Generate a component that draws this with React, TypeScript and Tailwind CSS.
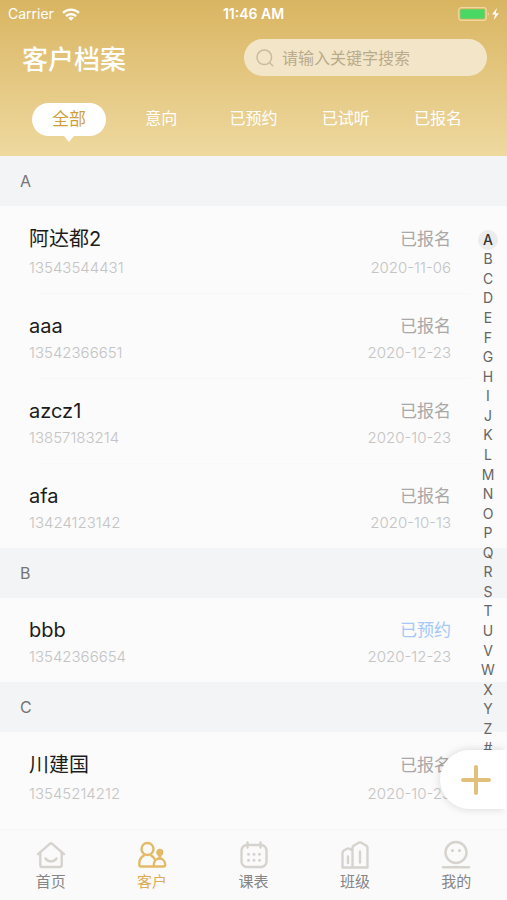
import { useState } from "react";
import type { ReactNode } from "react";

type Customer = {
  name: string;
  phone: string;
  status: string;
  date: string;
};

const filters = ["全部", "意向", "已预约", "已试听", "已报名"];

const groups: { letter: string; customers: Customer[] }[] = [
  {
    letter: "A",
    customers: [
      { name: "阿达都2", phone: "13543544431", status: "已报名", date: "2020-11-06" },
      { name: "aaa", phone: "13542366651", status: "已报名", date: "2020-12-23" },
      { name: "azcz1", phone: "13857183214", status: "已报名", date: "2020-10-23" },
      { name: "afa", phone: "13424123142", status: "已报名", date: "2020-10-13" },
    ],
  },
  {
    letter: "B",
    customers: [
      { name: "bbb", phone: "13542366654", status: "已预约", date: "2020-12-23" },
    ],
  },
  {
    letter: "C",
    customers: [
      { name: "川建国", phone: "13545214212", status: "已报名", date: "2020-10-23" },
    ],
  },
];

const letters = "ABCDEFGHIJKLMNOPQRSTUVWXYZ#".split("");

function Icon({ children }: { children: ReactNode }) {
  return (
    <svg
      viewBox="0 0 30 30"
      className="size-[30px]"
      fill="none"
      stroke="currentColor"
      strokeWidth="2.4"
      strokeLinecap="round"
      strokeLinejoin="round"
      aria-hidden="true"
    >
      {children}
    </svg>
  );
}

const tabs = [
  {
    label: "首页",
    icon: (
      <Icon>
        <path d="M2 14.2 13.8 3.9a1.8 1.8 0 0 1 2.4 0L28 14.2" />
        <path d="M4.3 12.5V25a2 2 0 0 0 2 2h17.4a2 2 0 0 0 2-2V12.5" />
        <path d="M9.5 18.5c2.6 3.8 8.4 3.8 11 0" />
      </Icon>
    ),
  },
  {
    label: "客户",
    icon: (
      <Icon>
        <circle cx="10.5" cy="9" r="6" />
        <path d="M7 15.4C4.200 17 2.300 20 2.300 23.500V25a1.500 1.500 0 0 0 1.500 1.500h22.900a1.500 1.500 0 0 0 1.500-1.500c0-4-2.500-6.500-5.700-6.500s-5.700 2.500-5.700 6.500v1.200" />
        <path d="M14 15.4c2 1 3.400 2.600 4.200 4.600" />
        <circle cx="22.800" cy="12.300" r="2.400" fill="currentColor" />
        <path d="M22.800 13v5" strokeWidth="3" />
      </Icon>
    ),
  },
  {
    label: "课表",
    icon: (
      <Icon>
        <rect x="2.500" y="5" width="25" height="22" rx="5.500" />
        <path d="M8.500 2.500v5M21.500 2.500v5" />
        <path
          d="M9.500 14.200h.01M15 14.200h.01M20.500 14.200h.01M9.500 20.200h.01M15 20.200h.01M20.500 20.200h.01"
          strokeWidth="3"
        />
      </Icon>
    ),
  },
  {
    label: "班级",
    icon: (
      <Icon>
        <path
          d="M2.500 27.500V12.800c0-.8.4-1.500 1-2l3.500-2.100a2.500 2.500 0 0 1 2.500 0l3 1.800M2.500 27.500h25V7.700c0-.8-.4-1.600-1.100-2L21.300 2.700a3 3 0 0 0-2.600 0L13.600 5.700c-.7.4-1.100 1.200-1.100 2v19.800"
        />
        <path d="M8 16.500v6.500M20 11.500v11" />
      </Icon>
    ),
  },
  {
    label: "我的",
    icon: (
      <Icon>
        <circle cx="15" cy="12.500" r="10.500" />
        <path d="M11.500 10.500h.01M18.500 10.500h.01" strokeWidth="3.200" />
        <path d="M2 27.200h26" />
      </Icon>
    ),
  },
];

function StatusBar() {
  return (
    <div className="grid h-7 grid-cols-3 items-center px-2 text-sm leading-none">
      <div className="flex items-center gap-2">
        <span>Carrier</span>
        <svg viewBox="0 0 18 13" className="h-[13px] w-[18px]" aria-hidden="true">
          <g fill="none" stroke="white" strokeWidth="2.300">
            <path d="M1 4.900a11.500 11.500 0 0 1 16 0" />
            <path d="M4 8.100a7.200 7.200 0 0 1 10 0" />
          </g>
          <path d="M9 12.800 6.200 10a4 4 0 0 1 5.600 0z" fill="white" />
        </svg>
      </div>
      <span className="text-center font-semibold">11:46 AM</span>
      <svg viewBox="0 0 44 14" className="h-3.5 w-11 justify-self-end" aria-hidden="true">
        <rect x="3.700" y=".7" width="27.500" height="12.600" rx="2.500" fill="none" stroke="#f3d7a0" strokeWidth="1.200" />
        <rect x="5.300" y="2.300" width="24.300" height="9.400" rx="1" fill="#4bd763" />
        <path d="M32.800 5.300c1.600.4 1.600 3 0 3.400z" fill="#f3d7a0" />
        <path d="M42 1 37 7.600h3.200L38.700 13 44 6.300h-3.400z" fill="white" />
      </svg>
    </div>
  );
}

function CustomerRow({ customer }: { customer: Customer }) {
  const leading = /[\u4e00-\u9fff]/.test(customer.name) ? "leading-[27px]" : "leading-6";
  const statusColor = customer.status === "已预约" ? "text-[#a5c8f8]" : "text-[#a8a8a8]";

  return (
    <li className="group pt-5">
      <div className="flex justify-between pr-14 pb-[15px] pl-[29px]">
        <div>
          <h3 className={`text-xl text-[#1c1c1c] ${leading}`}>{customer.name}</h3>
          <p className="mt-[5px] text-[15px] leading-5 font-light text-[#c4c4c4]">{customer.phone}</p>
        </div>
        <div className="text-right">
          <p className={`text-[17px] ${leading} ${statusColor}`}>{customer.status}</p>
          <p className="mt-[5px] text-[15px] leading-5 font-light text-[#c4c4c4]">{customer.date}</p>
        </div>
      </div>
      <div className="mr-9 ml-10 h-px bg-[#f7f7f7] group-last:hidden" />
    </li>
  );
}

export default function App() {
  const [filter, setFilter] = useState("全部");
  const [tab, setTab] = useState("客户");

  return (
    <div className="flex h-dvh flex-col overflow-hidden bg-[#fbfbfb] font-['Inter','Noto_Sans_CJK_SC',sans-serif]">
      <header className="shrink-0 bg-linear-to-b from-[#d9b561] to-[#efd99f] text-white">
        <StatusBar />
        <div className="flex items-center justify-between pt-[11px] pr-5 pl-[22px]">
          <h1 className="pt-1 text-[26px] leading-8 font-medium">客户档案</h1>
          <label className="flex h-[37px] w-[243px] items-center gap-2 rounded-full bg-[#f3e6c8] pl-3">
            <svg
              viewBox="0 0 18 18"
              className="size-[18px] shrink-0"
              fill="none"
              stroke="#c9bb9c"
              strokeWidth="1.500"
              strokeLinecap="round"
              aria-hidden="true"
            >
              <circle cx="8.300" cy="8.300" r="7.300" />
              <path d="m13.700 13.700 3 3" />
            </svg>
            <input
              type="search"
              aria-label="搜索"
              placeholder="请输入关键字搜索"
              className="w-full min-w-0 bg-transparent text-base text-[#8b7b58] outline-none placeholder:text-[#b9ab8c]"
            />
          </label>
        </div>
        <nav className="flex px-[23px] pt-[27px] pb-5">
          {filters.map((name) => (
            <div key={name} className="flex flex-1 justify-center">
              {name === filter ? (
                <button className="relative h-[33px] w-[74px] rounded-full bg-white text-[17px] leading-none text-[#cf9f3c]">
                  {name}
                  <svg
                    viewBox="0 0 14 8"
                    className="absolute top-full left-1/2 -mt-px h-2 w-3.5 -translate-x-1/2"
                    aria-hidden="true"
                  >
                    <path d="M0 0h14c-2 .5-3 2-6 6q-1 1.300-2 0C3 2 2 .5 0 0z" fill="white" />
                  </svg>
                </button>
              ) : (
                <button className="h-[33px] pb-[3px] text-base leading-none" onClick={() => setFilter(name)}>
                  {name}
                </button>
              )}
            </div>
          ))}
        </nav>
      </header>

      <main className="relative min-h-0 flex-1">
        <div className="h-full overflow-y-auto [scrollbar-width:none]">
          {groups.map((group) => (
            <section key={group.letter}>
              <h2 className="flex h-[50px] items-center bg-[#f3f4f6] pl-5 text-base text-[#757575]">
                {group.letter}
              </h2>
              <ul>
                {group.customers.map((customer) => (
                  <CustomerRow key={customer.phone} customer={customer} />
                ))}
              </ul>
            </section>
          ))}
        </div>

        <div className="absolute top-[74px] right-[9px] bottom-[71px] flex w-5 flex-col text-sm text-[#666]">
          {letters.map((letter) => (
            <button
              key={letter}
              className="flex flex-1 items-center justify-center rounded-full leading-none first:bg-[#ececec] first:font-medium first:text-[#333]"
            >
              {letter}
            </button>
          ))}
        </div>

        <button
          aria-label="添加客户"
          className="absolute right-0.5 bottom-5 flex h-[59px] w-[65px] items-center justify-center rounded-l-full bg-white pl-1.5 shadow-[0_0_8px_rgba(0,0,0,0.15)] [clip-path:inset(-12px_0_-12px_-12px)]"
        >
          <svg viewBox="0 0 32 32" className="size-8" stroke="#e0c07a" strokeWidth="4" strokeLinecap="round" aria-hidden="true">
            <path d="M16 3v26M3 16h26" />
          </svg>
        </button>
      </main>

      <nav className="flex h-[71px] shrink-0 border-t border-[#f5f5f5] bg-[#fafafa]">
        {tabs.map(({ label, icon }) => (
          <button
            key={label}
            onClick={() => setTab(label)}
            className={`flex flex-1 flex-col items-center gap-0.5 pt-2.5 ${label === tab ? "text-[#e2ba68]" : "text-[#d6d3ce]"}`}
          >
            {icon}
            <span className={`text-[15px] leading-5 ${label === tab ? "text-[#dbae55]" : "text-[#858585]"}`}>
              {label}
            </span>
          </button>
        ))}
      </nav>
    </div>
  );
}
